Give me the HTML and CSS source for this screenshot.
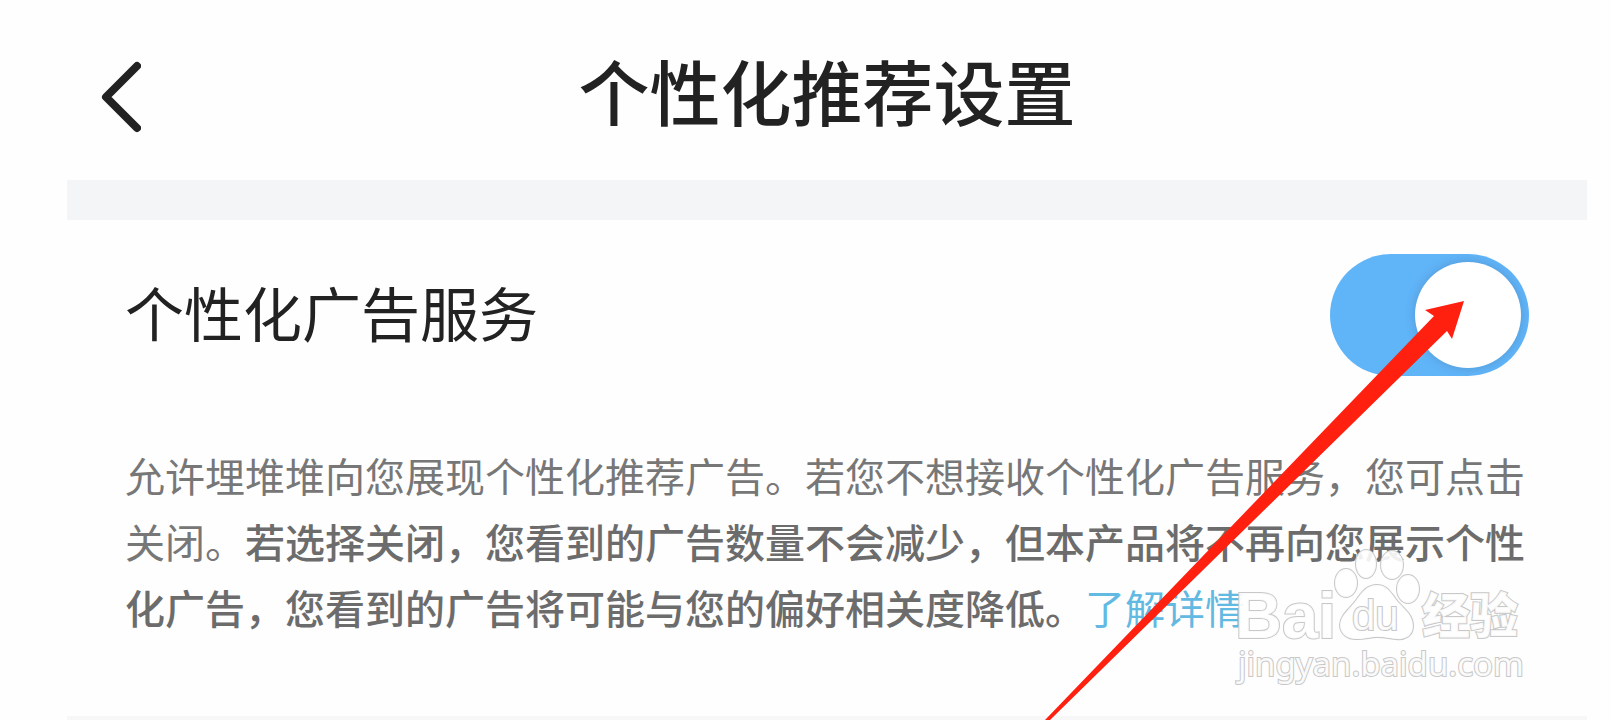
FILE: index.html
```html
<!DOCTYPE html>
<html lang="zh-CN">
<head>
    <meta charset="UTF-8">
    <meta name="viewport" content="width=device-width, initial-scale=1.0">
    <title>个性化推荐设置</title>
    <link rel="stylesheet" href="styles.css">
</head>
<body>

    <div class="page">
        <!-- 顶部导航 -->
        <header class="topbar">
            <a class="back" href="#" aria-label="返回">
                <svg width="40" height="72" viewBox="0 0 40 72" fill="none" stroke="#222" stroke-width="8" stroke-linecap="round" stroke-linejoin="round">
                    <path d="M36 5 L5 36 L36 67"/>
                </svg>
            </a>
            <h1>个性化推荐设置</h1>
        </header>

        <!-- 广告服务开关 -->
        <main class="settings">
            <div class="row">
                <label for="ad-switch">个性化广告服务</label>
                <input type="checkbox" id="ad-switch" class="switch" checked>
            </div>
            <p class="desc">允许埋堆堆向您展现个性化推荐广告。若您不想接收个性化广告服务，您可点击关闭。<strong>若选择关闭，您看到的广告数量不会减少，但本产品将不再向您展示个性化广告，您看到的广告将可能与您的偏好相关度降低。</strong><a href="#">了解详情</a></p>
        </main>
    </div>

    <!-- 箭头 -->
    <svg class="arrow" width="430" height="420" viewBox="0 0 430 420" aria-hidden="true">
        <path fill="#ff2010" d="M424 1 L385 10 L394 16 L5 420 H10 L407 31 L412 39 Z"/>
    </svg>

    <!-- 水印 -->
    <svg class="watermark" width="300" height="150" viewBox="0 0 300 150">
        <g class="outline">
            <text class="brand" x="5" y="98">Bai</text>
            <ellipse cx="116" cy="43" rx="11" ry="14"/>
            <ellipse cx="136" cy="24" rx="10" ry="14"/>
            <ellipse cx="162" cy="25" rx="11" ry="14"/>
            <ellipse cx="178" cy="49" rx="11" ry="14"/>
            <path d="M147 45 C156 45 160 51 165 58 C171 67 183 73 183 86 C183 96 175 100 166 99 C158 98 154 97 147 97 C140 97 136 99 128 99 C118 100 110 94 110 85 C110 75 121 68 127 59 C132 52 137 45 147 45 Z"/>
            <text class="du" x="122" y="90">du</text>
            <text class="brand-cn" x="192" y="93">经验</text>
            <text class="site" x="8" y="136">jingyan.baidu.com</text>
        </g>
    </svg>

</body>
</html>
```
FILE: styles.css
```css
body {
    font-family: "Noto Sans CJK SC", sans-serif;
    margin: 0;
    background-color: #fefefe;
    color: #222;
    position: relative;
}

.page {
    padding: 0 24px 0 67px;
}

/* 顶部导航 */
.topbar {
    display: grid;
    grid-template-columns: 1fr auto 1fr;
    align-items: center;
    height: 166px;
    padding-top: 14px;
}

.back {
    display: flex;
    padding-left: 34px;
}

.topbar h1 {
    grid-column: 2;
    margin: 0;
    padding-bottom: 16px;
    font-size: 71px;
    font-weight: 500;
    line-height: 90px;
}

/* 设置项 */
.settings {
    border-top: 40px solid #f3f5f7;
    border-bottom: 4px solid #f7f7f8;
    padding: 34px 58px 76px;
}

.row {
    display: flex;
    align-items: center;
    justify-content: space-between;
}

.row label {
    padding-bottom: 6px;
    font-size: 59px;
    line-height: 90px;
}

.switch {
    appearance: none;
    display: flex;
    align-items: center;
    justify-content: flex-end;
    box-sizing: border-box;
    width: 199px;
    height: 122px;
    margin: 0;
    padding: 8px;
    border-radius: 61px;
    background-color: #60b4f8;
    cursor: pointer;
}

.switch::before {
    content: "";
    width: 106px;
    height: 106px;
    border-radius: 50%;
    background-color: #fff;
    box-shadow: 0 0 10px rgba(60, 100, 140, 0.35);
}

.switch:not(:checked) {
    justify-content: flex-start;
    background-color: #ddd;
}

.desc {
    margin: 66px 0 0;
    font-size: 40px;
    line-height: 66px;
    color: #777;
}

.desc strong {
    font-weight: 500;
    color: #6c6c6c;
}

.desc a {
    color: #62b9e2;
    text-decoration: none;
}

/* 浮层 */
.arrow {
    position: absolute;
    top: 300px;
    right: 141px;
    pointer-events: none;
}

.watermark {
    position: absolute;
    top: 540px;
    right: 81px;
    pointer-events: none;
}

.outline {
    fill: #fff;
    fill-opacity: 0.9;
    stroke: #c8c8c8;
    stroke-width: 2px;
    paint-order: stroke;
}

.brand {
    font: bold 65px "Liberation Sans", sans-serif;
}

.brand-cn {
    font: 900 48px "Noto Sans CJK SC", sans-serif;
}

.du {
    font: 42px "Liberation Sans", sans-serif;
}

.site {
    font: 33px "Noto Sans", sans-serif;
}
```
